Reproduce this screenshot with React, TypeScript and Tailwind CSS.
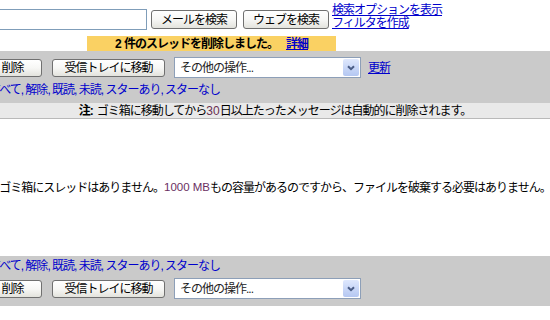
import React from 'react';

const FONT = "font-['Liberation_Sans','Noto_Sans_CJK_JP',sans-serif]";

const XpButton: React.FC<{ className?: string; children: React.ReactNode }> = ({ className = '', children }) => (
  <button
    className={`shrink-0 flex items-center justify-center rounded-[3px] border border-[#707070] bg-linear-to-b from-white via-[#f7f7f5] to-[#e3e3dd] text-[12px] text-black tracking-[-1px] leading-none ${className}`}
  >
    {children}
  </button>
);

const MoreSelect: React.FC = () => (
  <div className="shrink-0 ml-[9px] w-[187px] h-[21px] bg-white border border-[#8d9fb8] flex items-center">
    <span className="flex-1 pl-[5px] text-[12px] tracking-[-1px] text-[#222]">その他の操作...</span>
    <span className="mr-[1px] w-[16px] h-[17px] rounded-[2px] bg-linear-to-b from-[#dfe8fd] to-[#b4c7f2] flex items-center justify-center">
      <svg width="8" height="6" viewBox="0 0 8 6">
        <path d="M1 1.2 L4 4.2 L7 1.2" fill="none" stroke="#4a5d86" strokeWidth="2" />
      </svg>
    </span>
  </div>
);

const ActionRow: React.FC<{ withRefresh?: boolean }> = ({ withRefresh }) => (
  <div className="flex items-center h-[21px]">
    <XpButton className="-ml-[17px] w-[59px] h-[18px]">削除</XpButton>
    <XpButton className="ml-[10px] w-[113px] h-[18px]">受信トレイに移動</XpButton>
    <MoreSelect />
    {withRefresh && (
      <a className="ml-[7px] text-[12px] tracking-[-1px] text-[#0000cc] underline">更新</a>
    )}
  </div>
);

const SelectLinks: React.FC = () => {
  const items = ['すべて', '解除', '既読', '未読', 'スターあり', 'スターなし'];
  return (
    <div className="-ml-[11px] text-[12px] leading-[14px] tracking-[-1px] text-[#0000cc] whitespace-nowrap">
      {items.map((t, i) => (
        <span key={t}>
          <a>{t}</a>
          {i < items.length - 1 && ', '}
        </span>
      ))}
    </div>
  );
};

export default function App() {
  return (
    <div className={`w-[550px] h-[320px] overflow-hidden bg-white text-black ${FONT}`}>
      {/* search bar */}
      <div className="flex items-start h-[36px]">
        <input className="shrink-0 -ml-[60px] mt-[9px] w-[207px] h-[21px] border border-[#7f9db9] bg-white" />
        <XpButton className="ml-[4px] mt-[10px] w-[86px] h-[19px]">メールを検索</XpButton>
        <XpButton className="ml-[6px] mt-[10px] w-[86px] h-[19px]">ウェブを検索</XpButton>
        <div className="ml-[3px] mt-[4px] flex flex-col text-[12px] leading-[13px] tracking-[-1px] text-[#0000cc] whitespace-nowrap">
          <a className="underline">検索オプションを表示</a>
          <a className="underline">フィルタを作成</a>
        </div>
      </div>

      {/* notice */}
      <div className="ml-[87px] w-[249px] h-[15px] bg-[#fad163] flex items-center justify-center text-[12px] font-bold tracking-[-1px] whitespace-nowrap">
        <span>2<span className="tracking-normal"> </span>件のスレッドを削除しました。</span>
        <a className="ml-[8px] text-[#0000cc] underline">詳細</a>
      </div>

      {/* top toolbar */}
      <div className="bg-[#cacaca] pt-[6px] pb-[6px]">
        <ActionRow withRefresh />
        <div className="mt-[5px]">
          <SelectLinks />
        </div>
      </div>

      <div className="h-[16px] bg-[#e9e9e9] border-b border-[#b9b9b9] flex items-center justify-center text-[12px] tracking-[-1px] whitespace-nowrap">
        <span className="font-bold">注:</span>
        <span className="ml-[4px]">
          ゴミ箱に移動してから<span className="text-[#6a3050] tracking-normal">30</span>日以上たったメッセージは自動的に削除されます。
        </span>
      </div>

      {/* empty message */}
      <div className="h-[137px] flex items-center justify-center text-[12px] tracking-[-1px] whitespace-nowrap">
        ゴミ箱にスレッドはありません。
        <span className="text-[#6b2f62] text-[11.5px] tracking-normal">1000 MB</span>
        もの容量があるのですから、ファイルを破棄する必要はありません。
      </div>

      {/* bottom toolbar */}
      <div className="bg-[#cacaca] pt-[3px] pb-[7px]">
        <SelectLinks />
        <div className="mt-[5px]">
          <ActionRow />
        </div>
      </div>
    </div>
  );
}
